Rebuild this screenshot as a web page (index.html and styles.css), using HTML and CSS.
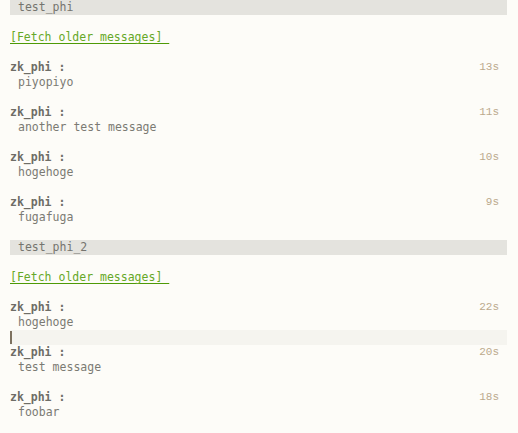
FILE: index.html
```html
<!DOCTYPE html>
<html>
<head>
<meta charset="utf-8">
<link rel="stylesheet" href="styles.css">
</head>
<body>
<div class="buffer">
  <div class="room-header">test_phi</div>
  <div class="blank"></div>
  <div class="line"><a class="fetch">[Fetch older messages]&nbsp;</a></div>
  <div class="blank"></div>
  <div class="msg">
    <div class="msg-head"><span class="name">zk_phi :</span><span class="time">13s</span></div>
    <div class="body">piyopiyo</div>
    <div class="blank"></div>
  </div>
  <div class="msg">
    <div class="msg-head"><span class="name">zk_phi :</span><span class="time">11s</span></div>
    <div class="body">another test message</div>
    <div class="blank"></div>
  </div>
  <div class="msg">
    <div class="msg-head"><span class="name">zk_phi :</span><span class="time">10s</span></div>
    <div class="body">hogehoge</div>
    <div class="blank"></div>
  </div>
  <div class="msg">
    <div class="msg-head"><span class="name">zk_phi :</span><span class="time">9s</span></div>
    <div class="body">fugafuga</div>
    <div class="blank"></div>
  </div>
  <div class="room-header">test_phi_2</div>
  <div class="blank"></div>
  <div class="line"><a class="fetch">[Fetch older messages]&nbsp;</a></div>
  <div class="blank"></div>
  <div class="msg">
    <div class="msg-head"><span class="name">zk_phi :</span><span class="time">22s</span></div>
    <div class="body">hogehoge</div>
    <div class="blank current"><span class="cursor"></span></div>
  </div>
  <div class="msg">
    <div class="msg-head"><span class="name">zk_phi :</span><span class="time">20s</span></div>
    <div class="body">test message</div>
    <div class="blank"></div>
  </div>
  <div class="msg">
    <div class="msg-head"><span class="name">zk_phi :</span><span class="time">18s</span></div>
    <div class="body">foobar</div>
    <div class="blank"></div>
  </div>
</div>
</body>
</html>
```

FILE: styles.css
```css
html, body {
  margin: 0;
  padding: 0;
  background: #fdfcf8;
}
body {
  padding: 0 11px 0 10px;
  font-family: "DejaVu Sans Mono", "Liberation Mono", monospace;
  font-size: 11.5px;
  line-height: 15px;
  color: #7b7a73;
}
.buffer {
  display: flex;
  flex-direction: column;
}
.room-header {
  height: 15px;
  background: #e4e3de;
  color: #75746e;
  padding-left: 8px;
}
.blank {
  height: 15px;
}
.line {
  height: 15px;
}
.fetch {
  color: #66a827;
  text-decoration: underline;
  text-decoration-color: #4e9a06;
  text-underline-offset: 2px;
}
.msg-head {
  display: flex;
  justify-content: space-between;
  height: 15px;
}
.name {
  font-weight: bold;
  color: #6e6d66;
}
.time {
  color: #bba98c;
  font-family: "Liberation Mono", monospace;
  font-size: 11px;
  padding-right: 8px;
}
.body {
  padding-left: 8px;
  height: 15px;
}
.current {
  background: #f5f4ef;
  display: flex;
  align-items: center;
}
.cursor {
  width: 2px;
  height: 13px;
  background: #7d715f;
}
```
